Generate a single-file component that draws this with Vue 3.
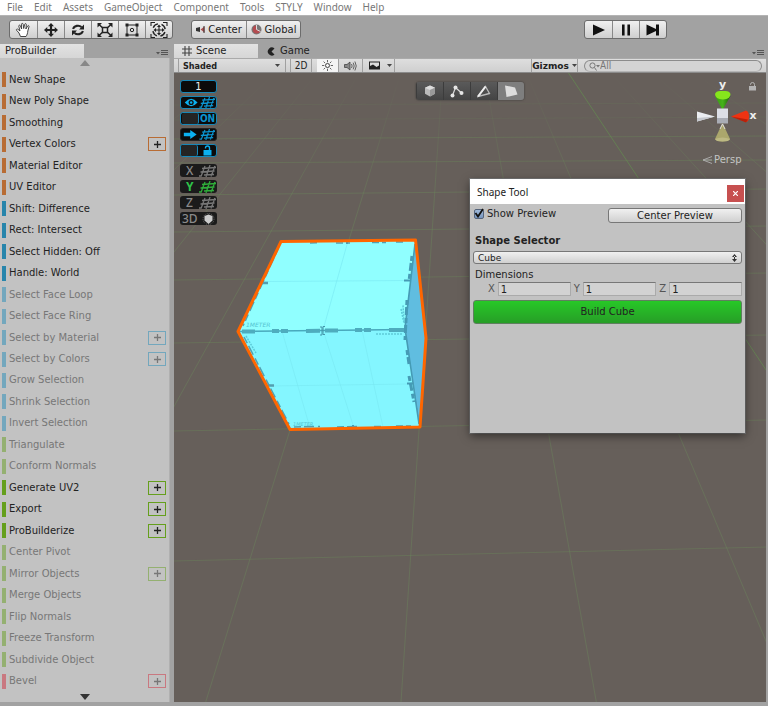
<script setup>
import { ref } from 'vue'

const menus = ['File', 'Edit', 'Assets', 'GameObject', 'Component', 'Tools', 'STYLY', 'Window', 'Help']

const tools = [
  { label: 'New Shape', kind: 'orange' },
  { label: 'New Poly Shape', kind: 'orange' },
  { label: 'Smoothing', kind: 'orange' },
  { label: 'Vertex Colors', kind: 'orange', more: true },
  { label: 'Material Editor', kind: 'orange' },
  { label: 'UV Editor', kind: 'orange' },
  { label: 'Shift: Difference', kind: 'blue' },
  { label: 'Rect: Intersect', kind: 'blue' },
  { label: 'Select Hidden: Off', kind: 'blue' },
  { label: 'Handle: World', kind: 'blue' },
  { label: 'Select Face Loop', kind: 'blue', off: true },
  { label: 'Select Face Ring', kind: 'blue', off: true },
  { label: 'Select by Material', kind: 'blue', off: true, more: true },
  { label: 'Select by Colors', kind: 'blue', off: true, more: true },
  { label: 'Grow Selection', kind: 'blue', off: true },
  { label: 'Shrink Selection', kind: 'blue', off: true },
  { label: 'Invert Selection', kind: 'blue', off: true },
  { label: 'Triangulate', kind: 'green', off: true },
  { label: 'Conform Normals', kind: 'green', off: true },
  { label: 'Generate UV2', kind: 'green', more: true },
  { label: 'Export', kind: 'green', more: true },
  { label: 'ProBuilderize', kind: 'green', more: true },
  { label: 'Center Pivot', kind: 'green', off: true },
  { label: 'Mirror Objects', kind: 'green', off: true, more: true },
  { label: 'Merge Objects', kind: 'green', off: true },
  { label: 'Flip Normals', kind: 'green', off: true },
  { label: 'Freeze Transform', kind: 'green', off: true },
  { label: 'Subdivide Object', kind: 'green', off: true },
  { label: 'Bevel', kind: 'red', off: true, more: true },
]

// Ground grid: depth lines share one vanishing point, cross lines get closer with distance.
const depthLines = []
for (let k = -9; k <= 11; k++) {
  const x = 419 + 129 * k
  const slope = (x - 454) / 529
  depthLines.push({ x1: 454 + slope * 172, y1: 73, x2: 454 + slope * 801, y2: 702, strong: k === 3 })
}
const crossLines = [
  [561, 547], [431, 420], [343, 335], [280, 273], [232, 226], [195, 189],
  [163, 160], [139, 136], [120, 117], [105, 103],
]

const showPreview = ref(true)
const shape = ref('Cube')
const dims = ref([{ axis: 'X', value: '1' }, { axis: 'Y', value: '1' }, { axis: 'Z', value: '1' }])
</script>

<template>
  <div class="editor">
    <nav class="menubar">
      <a v-for="m in menus" :key="m" href="#">{{ m }}</a>
    </nav>

    <header class="toolbar">
      <div class="group tools">
        <button aria-label="Hand">
          <svg width="18" height="16" viewBox="0 0 18 16"><path d="M5.5 14.5 4 11 1.5 8.2c-.5-1 .8-1.6 1.6-.8L5 9 3.8 4.2c-.2-1.2 1.2-1.5 1.6-.4L6.600 7 6.500 2.300c0-1.200 1.500-1.200 1.700 0L8.700 6.500l1-4.200c.3-1.100 1.700-.8 1.600.3L10.900 7l1.700-3c.6-.9 1.800-.3 1.400.7L12.800 9c-.2 2.200-.6 3.800-1.800 5.500z" fill="#fff" stroke="#333" stroke-width=".9" /></svg>
        </button>
        <button aria-label="Move">
          <svg width="14" height="14" viewBox="0 0 14 14"><path d="M7 0l3 3.300H8.100v2.600h2.600V4L14 7l-3.300 3V8.100H8.100v2.600H10L7 14l-3-3.300h1.900V8.100H3.300V10L0 7l3.300-3v1.900h2.600V3.300H4z" fill="#222" /></svg>
        </button>
        <button aria-label="Rotate">
          <svg width="14" height="14" viewBox="0 0 14 14"><path d="M2 5.800a5.200 4.500 0 0 1 8.500-1.800M12 8.200A5.200 4.500 0 0 1 3.500 10" fill="none" stroke="#222" stroke-width="2.200" /><path d="M13 1.500v5H8zM1 12.500v-5h5z" fill="#222" /></svg>
        </button>
        <button aria-label="Scale">
          <svg width="16" height="14" viewBox="0 0 16 14"><path d="M2 1.500l12 11M14 1.500l-12 11" stroke="#222" stroke-width="1.500" /><path d="M.5 0h4.500L.5 4.500zM15.500 0H11l4.500 4.500zM.5 14H5L.5 9.500zM15.500 14H11l4.500-4.500z" fill="#222" /><path d="M5.500 4.500h5v5h-5z" fill="#e2e2e2" stroke="#222" stroke-width="1.500" /></svg>
        </button>
        <button aria-label="Rect">
          <svg width="16" height="16" viewBox="0 0 16 16"><path d="M3 3h10v10H3z" fill="none" stroke="#222" /><path d="M1.500 1.500h3v3h-3zM11.500 1.500h3v3h-3zM1.500 11.500h3v3h-3zM11.500 11.500h3v3h-3z" fill="#222" /><circle cx="8" cy="8" r="1.700" fill="none" stroke="#222" /></svg>
        </button>
        <button aria-label="Transform">
          <svg width="18" height="16" viewBox="0 0 18 16"><circle cx="9" cy="8" r="6.200" fill="none" stroke="#222" stroke-width="1.400" stroke-dasharray="6 3.700" stroke-dashoffset="-2" /><path d="M9 2.500l2 2.500H7zM9 13.500L7 11h4zM3.500 8L6 6v4zM14.500 8L12 6v4z" fill="#222" /><path d="M9 5v6M6 8h6M1 4V.5h4M17 4V.5h-4M1 12v3.500h4M17 12v3.500h-4" fill="none" stroke="#222" stroke-width="1.100" /></svg>
        </button>
      </div>
      <div class="group pivot">
        <button>
          <svg width="9" height="8" viewBox="0 0 9 8"><path d="M0 2l4-1v5L0 5z" fill="#333" /><path d="M4.500 3.500L8.500.500v6z" fill="#b05050" /><path d="M8 0v7" stroke="#333" /></svg>
          Center
        </button>
        <button>
          <svg width="11" height="11" viewBox="0 0 11 11"><circle cx="5.500" cy="5.500" r="5" fill="#777" /><path d="M5 1.500a4 4 0 1 0 4.500 5L5.500 5.500z" fill="#b44c50" /><path d="M5.500 1v4.500l4 2" fill="none" stroke="#ddd" /></svg>
          Global
        </button>
      </div>
      <div class="group play">
        <button aria-label="Play"><svg width="14" height="12" viewBox="0 0 14 12"><path d="M1 .5L13 6 1 11.500z" fill="#111" /></svg></button>
        <button aria-label="Pause"><svg width="10" height="12" viewBox="0 0 10 12"><path d="M1 .5h2.600v11H1zM6.400.5H9v11H6.400z" fill="#111" /></svg></button>
        <button aria-label="Step"><svg width="14" height="12" viewBox="0 0 14 12"><path d="M.5.5L10 5V.5h3v11h-3V7L.5 11.500z" fill="#111" /></svg></button>
      </div>
    </header>

    <div class="workspace">
      <aside class="dock">
        <div class="tabs">
          <button class="tab on">ProBuilder</button>
          <button class="options" aria-label="Panel options"><svg width="12" height="6" viewBox="0 0 12 6"><path d="M0 2h4L2 4.500z" fill="#555" /><path d="M5 .5h7M5 2.500h7M5 4.500h7" stroke="#555" /></svg></button>
        </div>
        <div class="panel">
          <button class="scroll" aria-label="Scroll up"><svg width="10" height="6" viewBox="0 0 10 6"><path d="M5 0l5 6H0z" fill="#888" /></svg></button>
          <ul>
            <li v-for="t in tools" :key="t.label" :class="[t.kind, { off: t.off }]">
              <button class="tool" :disabled="t.off">{{ t.label }}</button>
              <button v-if="t.more" class="more" :disabled="t.off" :aria-label="t.label + ' options'"><svg width="7" height="7" viewBox="0 0 7 7"><path d="M3.500 0v7M0 3.500h7" stroke="currentColor" stroke-width="1.300" /></svg></button>
            </li>
          </ul>
          <button class="scroll" aria-label="Scroll down"><svg width="10" height="6" viewBox="0 0 10 6"><path d="M5 6l5-6H0z" fill="#333" /></svg></button>
        </div>
      </aside>

      <main class="view">
        <div class="tabs">
          <button class="tab on scene-tab"><svg width="10" height="10" viewBox="0 0 10 10"><path d="M3 0v10M7 0v10M0 3h10M0 7h10" stroke="#444" stroke-width="1.100" /></svg>Scene</button>
          <button class="tab"><svg width="8" height="9" viewBox="0 0 8 9"><path d="M7.500 1.500A4 4 0 1 0 7.500 7.500L4.500 4.500z" fill="#222" /></svg>Game</button>
          <button class="options" aria-label="View options"><svg width="12" height="6" viewBox="0 0 12 6"><path d="M0 2h4L2 4.500z" fill="#555" /><path d="M5 .5h7M5 2.500h7M5 4.500h7" stroke="#555" /></svg></button>
        </div>

        <div class="viewbar">
          <div class="mode">
            <select aria-label="Draw mode"><option>Shaded</option></select>
            <svg width="5" height="4" viewBox="0 0 5 4"><path d="M0 0h5L2.500 3z" fill="#444" /></svg>
          </div>
          <button class="two">2D</button>
          <button class="lit" aria-label="Lighting"><svg width="11" height="11" viewBox="0 0 11 11"><circle cx="5.500" cy="5.500" r="2" fill="none" stroke="#444" /><path d="M5.500 0v2.300M5.500 8.700V11M0 5.500h2.300M8.700 5.500H11M1.600 1.600l1.600 1.600M7.800 7.800l1.600 1.600M9.400 1.600L7.800 3.200M3.200 7.800L1.600 9.400" stroke="#555" stroke-width=".9" /></svg></button>
          <button class="sound" aria-label="Audio"><svg width="13" height="10" viewBox="0 0 13 10"><path d="M.5 3.500h2.500L6 1v8L3 6.500H.5z" fill="#888" stroke="#444" stroke-width=".8" /><path d="M7.500 3q1.300 2 0 4M9.200 1.700q2 3.300 0 6.600M10.900.5q2.700 4.500 0 9" fill="none" stroke="#555" stroke-width=".9" /></svg></button>
          <button class="sky" aria-label="Effects"><svg width="11" height="9" viewBox="0 0 11 9"><path d="M0 .5h11v8H0z" fill="#222" /><path d="M1 1.500h9v3L7.500 6 4 3.500 1 5z" fill="#ddd" /></svg></button>
          <button class="drop" aria-label="Effects list"><svg width="5" height="4" viewBox="0 0 5 4"><path d="M0 0h5L2.500 3z" fill="#444" /></svg></button>
          <button class="gizmos">Gizmos<svg width="5" height="4" viewBox="0 0 5 4"><path d="M0 0h5L2.500 3z" fill="#444" /></svg></button>
          <label class="search">
            <svg width="11" height="9" viewBox="0 0 11 9"><circle cx="3.500" cy="3.500" r="2.600" fill="none" stroke="#777" /><path d="M5.500 5.500L7.500 8.500" stroke="#777" /><path d="M7 3h4L9 5.500z" fill="#777" /></svg>
            <input type="text" placeholder="All" aria-label="Search scene">
          </label>
        </div>

        <section class="viewport">
          <svg class="ground" viewBox="174 73 592 629" preserveAspectRatio="xMinYMin slice" aria-hidden="true">
            <defs>
              <linearGradient id="fade" x1="0" y1="73" x2="0" y2="200" gradientUnits="userSpaceOnUse">
                <stop offset="0" stop-color="#6b8a5b" stop-opacity="0" />
                <stop offset="1" stop-color="#6b8a5b" stop-opacity=".4" />
              </linearGradient>
            </defs>
            <line v-for="(l, i) in depthLines" :key="'d' + i" :x1="l.x1" :y1="l.y1" :x2="l.x2" :y2="l.y2" :class="{ strong: l.strong }" class="depth" />
            <line v-for="(l, i) in crossLines" :key="'c' + i" x1="174" :y1="l[0]" x2="768" :y2="l[1]" class="cross" :stroke-opacity="i > 7 ? .15 : .4" />
            <path d="M281 241.500L415.500 240 405 329.500 239 331.500z" fill="#90ffff" />
            <path d="M239 331.500L405 329.500 420 427 290 429z" fill="#84f6ff" />
            <path d="M415.500 240L426 338 420 427 405 329.500z" fill="#60bde0" />
            <path d="M348 241L323 330 354 428M264 281.500l145-1M270 386l138-2M282 331l28 97M362 330l21 97" fill="none" stroke="#78e8f2" stroke-width=".6" />
            <path d="M239 331.500L405 329.500" stroke="#48a9bd" stroke-width="1.500" />
            <path d="M242 331.500h13M272 331h7M281 331h7M306 331l14-.3M325 330.500h13M355 330h7M364 330h7M389 330h17" stroke="#4eacbe" stroke-width="4" />
            <path d="M320 327h2v8h-2M325 326.500h-2v8h2" fill="none" stroke="#4497aa" />
            <path d="M415 244L405 328 419 424" fill="none" stroke="#459bb5" stroke-width="1.600" />
            <path d="M412 256l-3 25M407 300l-2 40M407 350l2 14M409 376l5 26" fill="none" stroke="#459bb5" stroke-width="3" stroke-dasharray="5 2 8 3" />
            <path d="M404 280.500h6M407 383.500h6M347 242v2M353 425v3" stroke="#459bb5" stroke-width="2" />
            <path d="M278 249L243 326M244 337L289 424M294 427l26-.5M337 427l24-.5M374 426.500h10M396 426h15M310 243l10-.3M336 243h14M372 242.500h14M396 242h10" fill="none" stroke="#539fb0" stroke-width="1.500" stroke-dasharray="7 3 10 4" />
            <path d="M262 283h6M268 385.500h6" stroke="#539fb0" stroke-width="2.500" />
            <path d="M246 336l10 17M401 309l3 14-1-18M376 334h26" fill="none" stroke="#5dcbd9" stroke-width="1.500" stroke-dasharray="2 1" />
            <text x="246" y="327" class="meter">1METER</text>
            <text x="293" y="426" class="meter small">1METER</text>
            <path d="M281 241.500L415.500 240 426 338 420 427 290 429.500 238 331.500z" fill="none" stroke="#ff6600" stroke-width="3" stroke-linejoin="round" />
          </svg>

          <div class="progrids">
            <button class="cy">1</button>
            <button class="cy" aria-label="Grid visibility"><svg width="35" height="11" viewBox="0 0 36 12"><path d="M3 6q7-8 14 0-7 8-14 0z" fill="#0bb0f0" /><circle cx="10" cy="6" r="2.800" fill="#111" /><circle cx="10" cy="6" r="1.300" fill="#0bb0f0" /><use href="#mesh" stroke="#0b94d0" /></svg></button>
            <button class="cy split"><span></span>ON</button>
            <button class="cy dark" aria-label="Push to grid"><svg width="35" height="11" viewBox="0 0 36 12"><path d="M2 4h7V1l7 5-7 5V8H2z" fill="#0bb0f0" /><use href="#mesh" stroke="#0b94d0" /></svg></button>
            <button class="cy split" aria-label="Lock grid"><span></span><svg width="11" height="11" viewBox="0 0 11 11"><path d="M1.500 5h8v5.500h-8z" fill="#0bb0f0" /><path d="M3.500 3.500V3a2 2 0 0 1 4 0v2.500" fill="none" stroke="#0bb0f0" stroke-width="1.400" /></svg></button>
            <button class="axis first"><b>X</b><svg width="17" height="12" viewBox="19 0 17 12"><g id="mesh" fill="none" stroke-width="1.300"><path d="M25 1l-4 10.500M30 0l-4 12M35 1l-4 10.500M22 3.500l14-1M20.500 7l14-1M19 11l2 0M24 10l10-.5" /></g><use href="#mesh" stroke="#777" /></svg></button>
            <button class="axis green"><b>Y</b><svg width="17" height="12" viewBox="19 0 17 12"><use href="#mesh" stroke="#2fae3a" /></svg></button>
            <button class="axis"><b>Z</b><svg width="17" height="12" viewBox="19 0 17 12"><use href="#mesh" stroke="#777" /></svg></button>
            <button class="axis"><b>3D</b><svg width="16" height="12" viewBox="0 0 16 12"><circle cx="8.500" cy="6" r="5.500" fill="none" stroke="#666" stroke-dasharray="1 1" /><path d="M4.500 3l4-1.500 4 1.500v4.500l-4 3.500-4-3.500z" fill="#ccc" /></svg></button>
          </div>

          <div class="modes">
            <button aria-label="Object"><svg width="12" height="12" viewBox="0 0 12 12"><path d="M6 .5l5 2.300v6L6 11.500 1 8.800v-6z" fill="#bbb" /><path d="M6 .5l5 2.300L6 5 1 2.800z" fill="#ddd" /><path d="M6 5v6.500l5-2.700v-6z" fill="#999" /></svg></button>
            <button aria-label="Vertex"><svg width="14" height="13" viewBox="0 0 14 13"><path d="M2.500 10.500L5.500 2.500 11 7.500" fill="none" stroke="#ddd" stroke-width="1.200" /><g fill="#e6e6e6"><circle cx="2.500" cy="10.500" r="2" /><circle cx="5.500" cy="2.500" r="2" /><circle cx="11.500" cy="8" r="2" /></g></svg></button>
            <button aria-label="Edge"><svg width="14" height="13" viewBox="0 0 14 13"><path d="M1 11.500L8.500 1.500 12.500 8.500z" fill="none" stroke="#bbb" stroke-width="1.300" /><path d="M1 11.500L8.500 1.500" stroke="#eee" stroke-width="2" /></svg></button>
            <button class="on" aria-label="Face"><svg width="14" height="13" viewBox="0 0 14 13"><path d="M1 .5L11 2.500 13.500 9.500 2.500 12z" fill="#ddd" /></svg></button>
          </div>

          <div class="orient">
            <svg width="66" height="70" viewBox="694 78 66 70">
              <defs>
                <linearGradient id="cone" x1="0" x2="1"><stop offset="0" stop-color="#3b9a14" /><stop offset=".5" stop-color="#45b31a" /><stop offset="1" stop-color="#205f0c" /></linearGradient>
              </defs>
              <text x="722.500" y="88" class="ax">y</text>
              <text x="753" y="119" class="ax">x</text>
              <path d="M715 96l7.500 14 8-14z" fill="url(#cone)" />
              <path d="M715 94q1-3 5-3h5.500q4 0 5 3 0 5-7.500 5.500-8-.5-8-5.500z" fill="#86e61c" />
              <path d="M697 111.500l18 5-18 5z" fill="#eceef2" /><path d="M697 118l18-1.500-18 5z" fill="#c5c8ce" />
              <path d="M731 116.500l15-6q3 1 3 6t-3 5.500z" fill="#ee3312" /><path d="M731 116.500l17 3-2 3z" fill="#b8210a" />
              <path d="M717 108.500h11v10h-11z" fill="#dcdfe6" /><path d="M717 118h11v5.500h-11z" fill="#a9adb5" />
              <path d="M722.500 123l7.500 16q-1 2.500-7.500 2.500t-7.500-2.500z" fill="#aba76c" /><path d="M715 139q7.500-3 15 0-1 2.500-7.500 2.500t-7.500-2.500z" fill="#bdb983" />
              <path d="M720 129l2.500-5 2.500 5" fill="none" stroke="#ddd" />
            </svg>
            <button class="persp"><svg width="10" height="8" viewBox="0 0 10 8"><path d="M10 .5L1 4l9 3.500M1 4h9" fill="none" stroke="#aaa" /></svg>Persp</button>
          </div>
          <button class="lock" aria-label="Lock rotation"><svg width="7" height="9" viewBox="0 0 7 9"><path d="M0 4h7v4.500H0z" fill="#b4b4b4" /><path d="M1.500 3V2.500a2 2 0 0 1 4 0V4" fill="none" stroke="#b4b4b4" /></svg></button>

          <form class="dialog" @submit.prevent>
            <div class="title"><h2>Shape Tool</h2><button type="button" class="close" aria-label="Close"><svg width="5" height="5" viewBox="0 0 5 5"><path d="M0 0l5 5M5 0L0 5" stroke="#fff" stroke-width="1.200" /></svg></button></div>
            <div class="body">
              <div class="row">
                <label class="check"><input v-model="showPreview" type="checkbox"><svg width="10" height="10" viewBox="0 0 10 10" aria-hidden="true"><path v-if="showPreview" d="M1.500 5L4 8.500 9 1" fill="none" stroke="#111" stroke-width="1.800" /></svg>Show Preview</label>
                <button type="button" class="btn">Center Preview</button>
              </div>
              <label class="heading" for="shape">Shape Selector</label>
              <div class="picker">
                <select id="shape" v-model="shape"><option>Cube</option></select>
                <svg width="5" height="8" viewBox="0 0 5 8"><path d="M0 3h5L2.500 0zM0 5h5L2.500 8zM2 2h1v4H2z" fill="#333" /></svg>
              </div>
              <div class="dimlabel">Dimensions</div>
              <div class="dims">
                <label v-for="d in dims" :key="d.axis">{{ d.axis }}<input v-model="d.value" type="text"></label>
              </div>
              <button class="build">Build Cube</button>
            </div>
          </form>
        </section>
      </main>
    </div>
  </div>
</template>

<style>
body { margin: 0; background: #a2a2a2; }
</style>

<style scoped>
.editor { min-height: 100vh; display: flex; flex-direction: column; background: #a2a2a2; font: 10px/12px "DejaVu Sans", Verdana, sans-serif; color: #222; }
* { box-sizing: border-box; }
button, input, select { font: inherit; color: inherit; margin: 0; padding: 0; border: 0; background: none; border-radius: 0; }
button { display: flex; align-items: center; justify-content: center; white-space: nowrap; }
svg { display: block; flex: none; }

.menubar { height: 15px; display: flex; gap: 11px; padding: 0 7px; background: #fff; font: 10px/14px "Noto Sans", sans-serif; }
.menubar a { color: #777; text-decoration: none; }

.toolbar { height: 29px; display: grid; grid-template-columns: 182px 393px 1fr; align-items: start; padding: 4px 0 0 9px; border-top: 1px solid #b4b4b4; }
.group { display: flex; width: max-content; border: 1px solid #6c6c6c; border-radius: 3px; overflow: hidden; background: linear-gradient(#f0f0f0, #cfcfcf); }
.group button { width: 27px; height: 17px; border-left: 1px solid #888; }
.group button:first-child { border-left: 0; }
.group.pivot button { width: 54px; gap: 3px; }

.workspace { flex: 1; display: grid; grid-template-columns: 170px 1fr; gap: 4px; padding: 0 2px 4px 0; }
.dock, .view { display: flex; flex-direction: column; min-width: 0; }
.tabs { display: flex; height: 14px; }
.tab { padding: 0 6px; gap: 5px; }
.tab.on { width: 84px; justify-content: flex-start; background: linear-gradient(#e2e2e2, #d6d6d6); }
.dock .tab { padding: 0 5px; }
.view .tab { padding: 0 9px; }
.view .scene-tab { gap: 4px; padding: 0 8px; }
.options { margin-left: auto; align-self: flex-end; padding: 0 2px 2px; }

.panel { flex: 1; display: flex; flex-direction: column; background: #c2c2c2; border-right: 1px solid #b0b0b0; }
.scroll { height: 10px; align-self: center; }
ul { flex: 1; list-style: none; margin: 0; padding: 1px 3px 0 2px; display: grid; grid-auto-rows: 1fr; }
li { --c: #b86c34; display: flex; align-items: center; border: 0; }
li::before { content: ""; width: 4px; height: 15px; background: var(--c); }
.blue { --c: #2785ab; }
.green { --c: #659f1c; }
.red { --c: #c93a48; }
li.off { --c: #73a7bd; color: #777; }
li.green.off { --c: #94b071; }
li.red.off { --c: #c97880; }
.tool { flex: 1; justify-content: flex-start; padding: 0 3px; text-align: left; }
.more { width: 18px; height: 14px; border: 1px solid var(--c); }

.viewbar { height: 15px; display: flex; background: linear-gradient(#dedede, #cfcfcf); border-top: 1px solid #aaa; border-bottom: 1px solid #8a8a8a; font: bold 9px/12px "DejaVu Sans Condensed", "DejaVu Sans", sans-serif; }
.viewbar > * { border-right: 1px solid #a0a0a0; }
.mode { width: 108px; margin-left: 4px; display: flex; align-items: center; padding-right: 5px; border-left: 1px solid #a0a0a0; }
.mode select { flex: 1; appearance: none; padding-left: 4px; font-size: 9px; }
.two { width: 22px; margin-left: 4px; border-left: 1px solid #a0a0a0; font-size: 10px; font-weight: normal; }
.lit { width: 22px; margin-left: 5px; background: #f4f4f4; }
.sound { width: 24px; }
.sky { width: 22px; border-right: 0; }
.drop { width: 10px; }
.gizmos { margin-left: auto; width: 47px; gap: 3px; border-left: 1px solid #a0a0a0; font-family: "DejaVu Sans", sans-serif; }
.search { width: 178px; margin: 1px 4px 0 6px; display: flex; align-items: center; padding-left: 4px; border: 1px solid #8c8c8c; border-bottom-color: #b5b5b5; border-radius: 7px; background: #d4d4d4; font-weight: normal; font-size: 10px; }
.search input { flex: 1; min-width: 0; height: 11px; outline: 0; }
.search input::placeholder { color: #777; opacity: 1; }

.viewport { position: relative; flex: 1; overflow: hidden; background: #665f5a; min-height: 400px; }
.ground { position: absolute; inset: 0; width: 100%; height: 100%; }
.depth { stroke: url(#fade); stroke-width: 1; }
.strong { stroke: #62934f; stroke-opacity: .6; }
.cross { stroke: #6b8a5b; stroke-width: 1; }
.meter { font: italic 6px "DejaVu Sans", sans-serif; fill: #54c4d2; }
.small { font-size: 5px; }

.progrids { position: absolute; left: 6px; top: 7px; display: grid; gap: 3px; }
.progrids button { width: 37px; height: 13px; border-radius: 3px; background: #0b0b0b; color: #eee; }
.progrids .cy { border: 1px solid #1787b8; }
.progrids .dark { border-color: #222; }
.progrids .split { color: #0b94d0; font: bold 10px/11px "DejaVu Sans Condensed", sans-serif; }
.split span { align-self: stretch; width: 17px; margin-right: 1px; background: #242424; border-right: 1px solid #1787b8; border-radius: 2px; }
.split svg { margin: 0 3px; }
.progrids .axis { background: #1b1b1b; color: #8a8a8a; justify-content: space-between; padding: 0 1px 0 6px; font: 12px/13px "Noto Sans", sans-serif; }
.axis b { font-weight: 500; }
.progrids .axis:last-child { padding-left: 2px; }
.progrids .first { margin-top: 4px; }
.progrids .green { color: #2fc24a; }
.progrids .green b { font-weight: bold; }

.modes { position: absolute; left: 242px; top: 9px; display: flex; border-radius: 3px; overflow: hidden; box-shadow: 0 0 2px #333; }
.modes button { width: 27px; height: 18px; background: linear-gradient(#5a5a5a, #444); border-left: 1px solid #3c3c3c; }
.modes .on { background: #7e7e7e; }

.orient { position: absolute; right: 6px; top: 5px; }
.ax { font: bold 11px "DejaVu Sans", sans-serif; fill: #eee; text-anchor: middle; }
.persp { color: #c4c4c4; gap: 2px; padding-left: 8px; margin-top: 6px; }
.lock { position: absolute; right: 10px; top: 9px; }

.dialog { position: absolute; left: 296px; top: 106px; width: 275px; min-height: 254px; margin: 0; background: #c2c2c2; box-shadow: 0 3px 9px rgba(0, 0, 0, .5), 0 0 0 1px #777; }
.title { height: 25px; display: flex; align-items: center; justify-content: space-between; padding-left: 7px; background: #fff; }
.title h2 { margin: 0; font: 10px/16px "Noto Sans", sans-serif; }
.close { width: 17px; height: 17px; margin: 4px 1px 0 0; background: #c75050; }
.body { padding: 3px 3px 0; display: flex; flex-direction: column; }
.row { display: flex; justify-content: space-between; height: 17px; }
.check { position: relative; display: flex; align-items: center; gap: 3px; height: 13px; padding-left: 1px; }
.check input { appearance: none; width: 10px; height: 10px; background: linear-gradient(#9fb9da, #7796c0); border: 1px solid #56657c; border-radius: 2px; }
.check svg { position: absolute; left: 1px; top: 1px; pointer-events: none; }
.btn { width: 134px; height: 15px; margin-top: 1px; border: 1px solid #777; border-radius: 3px; background: linear-gradient(#f0f0f0, #d0d0d0); }
.heading { padding: 11px 2px 4px; font-weight: bold; }
.picker { display: flex; height: 13px; align-items: center; padding: 0 4px; border: 1px solid #777; border-radius: 3px; background: linear-gradient(#f0f0f0, #d0d0d0); font-size: 9px; }
.picker select { flex: 1; appearance: none; outline: 0; }
.dimlabel { padding: 5px 2px 1px; }
.dims { display: grid; grid-template-columns: repeat(3, minmax(0, 1fr)); gap: 3px; padding-left: 15px; }
.dims label { display: flex; gap: 3px; align-items: center; color: #555; min-width: 0; }
.dims input { flex: 1; min-width: 0; height: 14px; padding: 0 2px; color: #222; background: #d2d2d2; border: 1px solid #aaa; border-top-color: #777; }
.build { height: 24px; margin-top: 4px; border: 1px solid #5f7f5f; border-radius: 3px; background: linear-gradient(#27c827, #279e27); }
</style>
